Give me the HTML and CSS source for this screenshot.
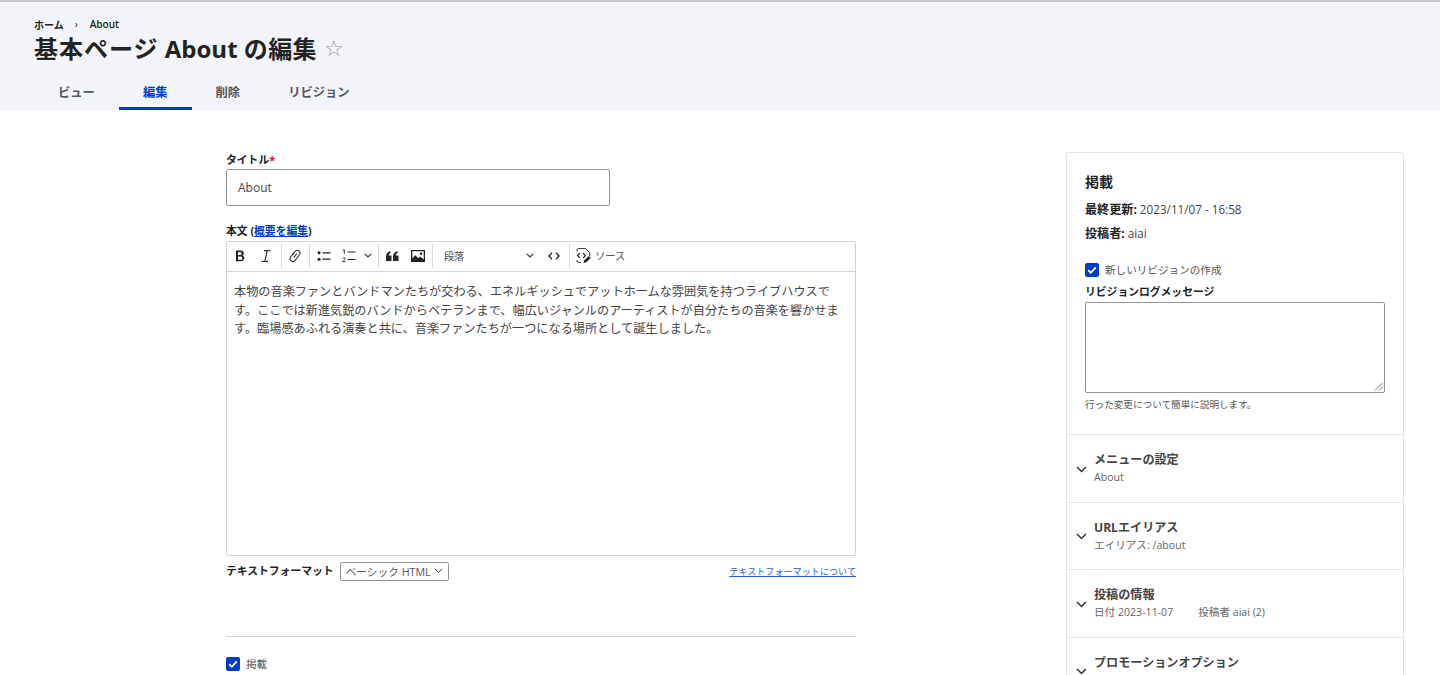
FILE: index.html
```html
<!DOCTYPE html>
<html lang="ja">
<head>
<meta charset="utf-8">
<title>基本ページ About の編集</title>
<link rel="stylesheet" href="styles.css">
</head>
<body>
<header class="page-head">
  <nav class="crumbs"><a>ホーム</a><span class="crumb-sep">›</span><a>About</a></nav>
  <div class="title-row">
    <h1><span class="title-cjk">基本ページ</span> About <span class="title-tail">の編集</span></h1>
    <span class="star">☆</span>
  </div>
  <ul class="tabs">
    <li class="tab">ビュー</li>
    <li class="tab active">編集</li>
    <li class="tab">削除</li>
    <li class="tab">リビジョン</li>
  </ul>
</header>
<main class="layout">
  <form class="form-col">
    <div class="field title-field">
      <label class="label">タイトル<span class="req">*</span></label>
      <div class="title-input">About</div>
    </div>
    <div class="field body-field">
      <label class="label">本文 (<a class="link">概要を編集</a>)</label>
      <div class="editor">
        <div class="toolbar">
          <span class="tool"><svg width="14" height="14" viewBox="0 0 14 14"><path d="M3 1.500h4.600c2 0 3.200 1 3.200 2.700 0 1.100-.6 1.900-1.600 2.300 1.300.3 2.100 1.300 2.100 2.600 0 2-1.400 3.200-3.700 3.200H3zM5 3.200V6h2.200c1 0 1.600-.5 1.600-1.400S8.200 3.200 7.200 3.200zM5 7.600v3.200h2.400c1.200 0 1.900-.6 1.900-1.600S8.600 7.600 7.400 7.600z" fill="#222" fill-rule="evenodd"/></svg></span>
          <span class="tool"><svg width="14" height="14" viewBox="0 0 14 14"><path d="M5 1.700h6.500M2.500 12.300H9M8.200 1.700 5.800 12.300" fill="none" stroke="#333" stroke-width="1.200"/></svg></span>
          <span class="tsep tsep-first"></span>
          <span class="tool"><svg width="14" height="14" viewBox="0 0 14 14"><g transform="rotate(-52 7 7)" fill="none" stroke="#333" stroke-width="1.100"><path d="M9 4.200H3.600a2.800 2.800 0 0 0 0 5.600h5.600"/><path d="M5 7h5"/><path d="M6.500 4.200h4a2.800 2.800 0 0 1 0 5.600H9"/></g></svg></span>
          <span class="tsep"></span>
          <span class="tool"><svg width="14" height="12" viewBox="0 0 14 12"><circle cx="2" cy="2.800" r="1.500" fill="#222"/><circle cx="2" cy="9.200" r="1.500" fill="#222"/><path d="M5.500 2.800h8M5.500 9.200h8" stroke="#222" stroke-width="1.200"/></svg></span>
          <span class="tool tool-drop"><svg width="14" height="14" viewBox="0 0 14 14"><path d="M.9 1.300 2.300.6v4.200M.8 9.500c.4-1 2.500-1 2.500.2 0 1-2 1.500-2.500 3h2.700" fill="none" stroke="#222" stroke-width=".9"/><path d="M5.500 3h8M5.500 10.500h8" stroke="#222" stroke-width="1.200"/></svg><svg class="chev" width="8" height="5" viewBox="0 0 8 5"><path d="M.8.800 4 4l3.200-3.200" fill="none" stroke="#333" stroke-width="1.200"/></svg></span>
          <span class="tsep"></span>
          <span class="tool tool-narrow"><svg width="13" height="10" viewBox="0 0 13 10"><path d="M0 10V6C0 3 1.500 1 4.500 0v2C3.300 2.500 2.800 3.300 2.800 4.500h2.700V10zM7 10V6c0-3 1.500-5 4.500-6v2c-1.200.5-1.700 1.300-1.700 2.500h2.700V10z" fill="#222"/></svg></span>
          <span class="tool tool-narrow tool-image"><svg width="14" height="12" viewBox="0 0 14 12"><path d="M0 0h14v12H0zM1.300 1.300v7l3-3 3 3 2-1.800 3.400 3V1.300z" fill="#222" fill-rule="evenodd"/><circle cx="10" cy="3.800" r="1.300" fill="#222"/></svg></span>
          <span class="tsep"></span>
          <span class="tool-select">段落<svg class="chev" width="8" height="5" viewBox="0 0 8 5"><path d="M.8.800 4 4l3.200-3.200" fill="none" stroke="#333" stroke-width="1.200"/></svg></span>
          <span class="tool tool-code"><svg width="12" height="8" viewBox="0 0 12 8"><path d="M4 .8.900 4 4 7.200M8 .8 11.100 4 8 7.200" fill="none" stroke="#222" stroke-width="1.300"/></svg></span>
          <span class="tsep"></span>
          <span class="tool-source"><svg width="17" height="17" viewBox="0 0 17 17"><path d="M2 4.500V2.800c0-.7.500-1.200 1.200-1.200h7.300l4.200 4v3.400M2 12.800v1.400c0 .7.500 1.200 1.200 1.200H6" fill="none" stroke="#333" stroke-width="1"/><path d="M5 6 2.400 8.500 5 11M8 6l2.600 2.500L8 11" fill="none" stroke="#222" stroke-width="1.100"/><path d="m8.500 16 .8-2.800 4.500-4.300 2 2-4.500 4.300z" fill="#222"/></svg><span class="source-text">ソース</span></span>
        </div>
        <div class="editor-body">本物の音楽ファンとバンドマンたちが交わる、エネルギッシュでアットホームな雰囲気を持つライブハウスです。ここでは新進気鋭のバンドからベテランまで、幅広いジャンルのアーティストが自分たちの音楽を響かせます。臨場感あふれる演奏と共に、音楽ファンたちが一つになる場所として誕生しました。</div>
      </div>
      <div class="format-row">
        <div class="format-left">
          <span class="label format-label">テキストフォーマット</span>
          <span class="format-select">ベーシック HTML<svg width="9" height="6" viewBox="0 0 9 6"><path d="M.8.800 4.500 4.500 8.200.8" fill="none" stroke="#444" stroke-width="1"/></svg></span>
        </div>
        <a class="link format-link">テキストフォーマットについて</a>
      </div>
    </div>
    <hr class="rule">
    <div class="check-row">
      <span class="check"><svg width="14" height="14" viewBox="0 0 14 14"><path d="m3.200 7.200 2.600 2.600 5-5.400" fill="none" stroke="#fff" stroke-width="1.800"/></svg></span>
      <span class="check-label">掲載</span>
    </div>
  </form>
  <aside class="sidebar">
    <section class="pub">
      <h2 class="pub-title">掲載</h2>
      <p class="meta"><b>最終更新:</b> 2023/11/07 - 16:58</p>
      <p class="meta"><b>投稿者:</b> aiai</p>
      <div class="check-row rev-check">
        <span class="check"><svg width="14" height="14" viewBox="0 0 14 14"><path d="m3.200 7.200 2.600 2.600 5-5.400" fill="none" stroke="#fff" stroke-width="1.800"/></svg></span>
        <span class="check-label">新しいリビジョンの作成</span>
      </div>
      <label class="label rev-label">リビジョンログメッセージ</label>
      <div class="rev-box"><svg class="grip" width="9" height="9" viewBox="0 0 9 9"><path d="M8.500 1 1 8.500M8.500 5 5 8.500" stroke="#777" stroke-width="1"/></svg></div>
      <p class="hint">行った変更について簡単に説明します。</p>
    </section>
    <section class="acc">
      <svg class="acc-chev" width="11" height="7" viewBox="0 0 11 7"><path d="M1 1l4.500 4.500L10 1" fill="none" stroke="#333" stroke-width="1.500"/></svg>
      <div><h3 class="acc-title">メニューの設定</h3><p class="acc-sub">About</p></div>
    </section>
    <section class="acc">
      <svg class="acc-chev" width="11" height="7" viewBox="0 0 11 7"><path d="M1 1l4.500 4.500L10 1" fill="none" stroke="#333" stroke-width="1.500"/></svg>
      <div><h3 class="acc-title">URLエイリアス</h3><p class="acc-sub">エイリアス: /about</p></div>
    </section>
    <section class="acc">
      <svg class="acc-chev" width="11" height="7" viewBox="0 0 11 7"><path d="M1 1l4.500 4.500L10 1" fill="none" stroke="#333" stroke-width="1.500"/></svg>
      <div><h3 class="acc-title">投稿の情報</h3><p class="acc-sub"><span class="sub-gap">日付 2023-11-07</span>投稿者 aiai (2)</p></div>
    </section>
    <section class="acc">
      <svg class="acc-chev" width="11" height="7" viewBox="0 0 11 7"><path d="M1 1l4.500 4.500L10 1" fill="none" stroke="#333" stroke-width="1.500"/></svg>
      <div><h3 class="acc-title">プロモーションオプション</h3><p class="acc-sub">&nbsp;</p></div>
    </section>
  </aside>
</main>
</body>
</html>
```
FILE: styles.css
```css
* { box-sizing: border-box; }
html, body { margin: 0; height: 675px; overflow: hidden; background: #fff; }
body { font-family: "Open Sans", "Noto Sans CJK JP", sans-serif; color: #333; font-size: 12px; }
p, h1, h2, h3, ul { margin: 0; padding: 0; }
.page-head { height: 110px; background: #f3f4f9; border-top: 2px solid #c9c9cc; padding: 15px 0 0 34px; }
.crumbs { display: flex; align-items: center; height: 14px; font-size: 10px; font-weight: 600; color: #222; }
.crumb-sep { margin: 0 12px 0 11px; font-weight: 400; }
.title-row { display: flex; align-items: center; height: 36px; }
h1 { font-size: 24px; font-weight: 700; color: #222; line-height: 36px; }
.title-cjk { letter-spacing: 1px; }
.title-tail { letter-spacing: .4px; }
.star { font-size: 22px; color: #9a9aa2; margin-left: 7px; line-height: 36px; font-family: "DejaVu Sans", sans-serif; }
.tabs { display: flex; list-style: none; margin-top: 10px; height: 35px; }
.tab { padding: 0 24px; font-size: 12.300px; font-weight: 600; color: #55565b; line-height: 32px; border-bottom: 3px solid transparent; height: 33px; }
.tab.active { color: #003cc5; border-bottom-color: #003cc5; }
.layout { display: flex; padding: 42px 36px 0 226px; justify-content: space-between; }
.form-col { width: 630px; }
.label { display: block; font-size: 10.800px; font-weight: 700; color: #222; line-height: 16px; }
.req { color: #d12; }
.field { margin-bottom: 16px; }
.title-field { margin-bottom: 17px; }
.title-input { width: 384px; height: 37px; margin-top: 1px; border: 1px solid #919297; border-radius: 2px; padding: 0 11px; line-height: 35px; font-size: 12px; color: #444; }
.link { color: #003cc5; text-decoration: underline; }
.editor { margin-top: 2px; border: 1px solid #d4d4d8; border-radius: 2px; height: 315px; display: flex; flex-direction: column; }
.toolbar { display: flex; align-items: center; height: 30px; border-bottom: 1px solid #d4d4d8; padding: 0 0 2px 0; flex: none; }
.tool { width: 26px; height: 28px; display: flex; align-items: center; justify-content: center; gap: 5px; }
.tool-drop { width: 40px; justify-content: flex-start; padding-left: 5px; gap: 8px; }
.tool-narrow { width: 25px; }
.tool-image { width: 26px; }
.tsep { width: 1px; height: 24px; background: #d9d9dc; margin: 0 1px; }
.tsep-first { margin-left: 2px; margin-right: 0; }
.tool-select { width: 107px; padding: 0 7px 0 10px; display: flex; align-items: center; justify-content: space-between; font-size: 10px; color: #444; }
.tool-code { width: 25px; margin-right: 2px; }
.tool-source { display: flex; align-items: center; gap: 3px; padding-left: 4px; color: #555; }
.source-text { font-size: 10.300px; }
.editor-body { flex: 1; padding: 11px 7px; font-size: 12.170px; line-height: 18.700px; color: #444; }
.format-row { display: flex; justify-content: space-between; align-items: center; margin-top: 5px; height: 20px; }
.format-left { display: flex; align-items: center; gap: 6px; }
.format-select { height: 19px; width: 109px; border: 1px solid #919297; border-radius: 2px; padding: 0 5px; display: flex; align-items: center; justify-content: space-between; font-size: 10.700px; color: #555; }
.format-link { font-size: 9.100px; color: #2a5fd0; }
.rule { border: 0; border-top: 1px solid #d4d4d8; margin: 55px 0 19px; }
.check-row { display: flex; align-items: center; gap: 6px; }
.check { width: 14px; height: 14px; border-radius: 2px; background: #003cc5; display: block; flex: none; }
.check svg { display: block; }
.check-label { font-size: 10.600px; color: #555; }
.sidebar { width: 338px; border: 1px solid #e4e4e8; border-radius: 2px; flex: none; }
.pub { padding: 19px 18px 0 18px; height: 281px; }
.pub-title { font-size: 14px; font-weight: 700; color: #222; line-height: 20px; margin-bottom: 9px; }
.meta { font-size: 11.700px; color: #444; line-height: 16px; margin-bottom: 7px; }
.meta b { color: #222; font-size: 12.100px; }
.rev-check { margin-top: 20px; }
.rev-label { margin-top: 7px; }
.rev-box { position: relative; width: 300px; height: 91px; margin-top: 2px; border: 1px solid #919297; border-radius: 2px; }
.grip { position: absolute; right: 1px; bottom: 1px; }
.hint { font-size: 9.600px; color: #555; margin-top: 5px; line-height: 14px; }
.acc { height: 67.500px; border-top: 1px solid #e4e4e8; display: flex; align-items: center; padding-left: 9px; gap: 7px; }
.acc-chev { flex: none; margin-top: 2px; }
.acc-title { font-size: 12.100px; font-weight: 700; color: #444; line-height: 18px; }
.acc-sub { font-size: 10.600px; color: #666; line-height: 15px; margin-top: 1px; }
.sub-gap { margin-right: 25px; }
```
